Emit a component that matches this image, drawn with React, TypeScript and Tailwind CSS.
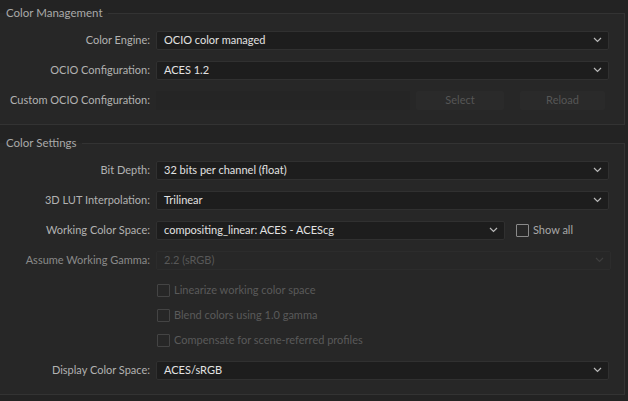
import { ReactNode } from 'react';

const font = { fontFamily: 'Lato, "Open Sans", sans-serif' };

function Chevron({ dim }: { dim?: boolean }) {
  return (
    <svg width="9" height="6" viewBox="0 0 9 6" className="shrink-0">
      <path d="M1 1 L4.5 4.5 L8 1" fill="none" stroke={dim ? '#3e3e3e' : '#b8b8b8'} strokeWidth="1.2" />
    </svg>
  );
}

function Dropdown({ value, disabled, className = '' }: { value: string; disabled?: boolean; className?: string }) {
  return (
    <div
      className={[
        'h-[19px] flex items-center justify-between pl-[7px] pr-[6px] rounded-[2px] border',
        disabled ? 'border-[#2c2c2c] bg-[#272727] text-[#585858]' : 'border-[#303030] bg-[#1d1d1d] text-[#e2e2e2]',
        className,
      ].join(' ')}
    >
      <span>{value}</span>
      <Chevron dim={disabled} />
    </div>
  );
}

function Row({ label, children, dim }: { label: string; children: ReactNode; dim?: boolean }) {
  return (
    <div className="h-[30px] flex items-center">
      <div className={['w-[150px] text-right shrink-0', dim ? 'text-[#8a8a8a]' : 'text-[#b2b2b2]'].join(' ')}>
        {label}
      </div>
      <div className="ml-[6px] flex-1 flex items-center">{children}</div>
    </div>
  );
}

function Check({ label, disabled }: { label: string; disabled?: boolean }) {
  return (
    <div className="flex items-center gap-[4px]">
      <div
        className={[
          'w-[13px] h-[13px] rounded-[1px] border',
          disabled ? 'border-[#444]' : 'border-[#8a8a8a]',
        ].join(' ')}
      />
      <span className={disabled ? 'text-[#5a5a5a]' : 'text-[#a8a8a8]'}>{label}</span>
    </div>
  );
}

function Group({ title, children }: { title: string; children: ReactNode }) {
  return (
    <fieldset className="w-[625px] border-t border-r border-b border-[#333333] bg-[#272727] pr-[15px] pb-[9px]">
      <legend className="h-[26px] leading-[26px] pl-[6px] pr-[5px] text-[11.5px] text-[#a9a9a9]">{title}</legend>
      {children}
    </fieldset>
  );
}

export default function App() {
  return (
    <div className="w-[628px] h-[401px] bg-[#232323] text-[11px] overflow-hidden" style={font}>
      <Group title="Color Management">
        <div className="-mt-px">
          <Row label="Color Engine:">
            <Dropdown value="OCIO color managed" className="flex-1" />
          </Row>
          <Row label="OCIO Configuration:">
            <Dropdown value="ACES 1.2" className="flex-1" />
          </Row>
          <Row label="Custom OCIO Configuration:">
            <div className="flex-1 flex items-center">
              <div className="w-[254px] h-[19px] bg-[#252525]" />
              <div className="ml-[6px] w-[88px] h-[19px] rounded-[2px] bg-[#2a2a2a] text-[#565656] flex items-center justify-center">
                Select
              </div>
              <div className="ml-[16px] w-[85px] h-[19px] rounded-[2px] bg-[#2a2a2a] text-[#565656] flex items-center justify-center">
                Reload
              </div>
            </div>
          </Row>
        </div>
      </Group>

      <div className="h-[5px]" />

      <Group title="Color Settings">
        <div className="-mt-px">
          <Row label="Bit Depth:">
            <Dropdown value="32 bits per channel (float)" className="flex-1" />
          </Row>
          <Row label="3D LUT Interpolation:">
            <Dropdown value="Trilinear" className="flex-1" />
          </Row>
          <Row label="Working Color Space:">
            <Dropdown value="compositing_linear: ACES - ACEScg" className="w-[349px]" />
            <div className="ml-[11px]">
              <Check label="Show all" />
            </div>
          </Row>
          <Row label="Assume Working Gamma:" dim>
            <Dropdown value="2.2 (sRGB)" disabled className="flex-1 -mr-[2px]" />
          </Row>
          <div className="pt-[3px] pl-[157px]">
            <div className="h-[25px] flex items-center">
              <Check label="Linearize working color space" disabled />
            </div>
            <div className="h-[25px] flex items-center">
              <Check label="Blend colors using 1.0 gamma" disabled />
            </div>
            <div className="h-[25px] flex items-center">
              <Check label="Compensate for scene-referred profiles" disabled />
            </div>
          </div>
          <div className="h-[2px]" />
          <Row label="Display Color Space:">
            <Dropdown value="ACES/sRGB" className="flex-1" />
          </Row>
        </div>
      </Group>
    </div>
  );
}
